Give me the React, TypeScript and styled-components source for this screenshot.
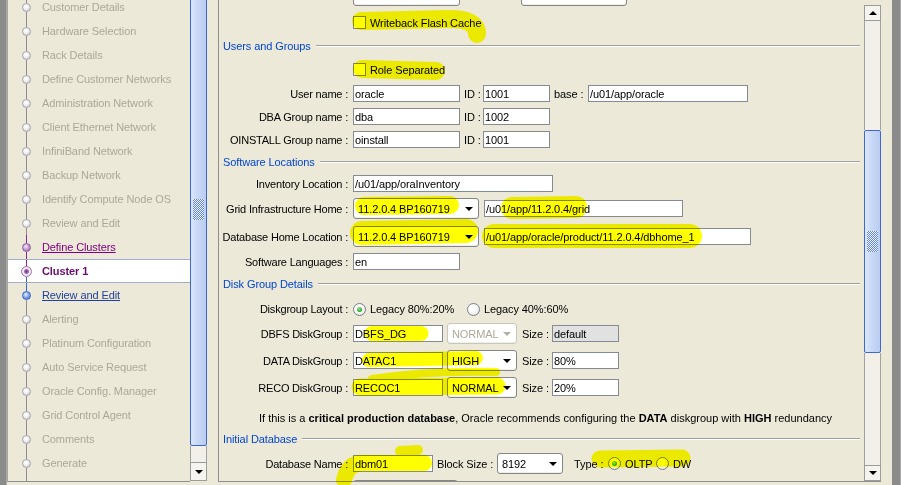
import React from "react";
import styled, { createGlobalStyle, css } from "styled-components";

const GlobalStyle = createGlobalStyle`
  html, body { margin: 0; padding: 0; background: #ece9d8; overflow: hidden; }
  #root { width: 901px; height: 485px; }
`;

const GRAY = "#8e8e8e";
const PURPLE = "#86268f";
const BLUE = "#3a66d0";

type Kind = "off" | "done" | "current" | "next";

interface NavItem {
  label: string;
  kind: Kind;
  top?: string;
  bottom?: string;
}

const NAV: NavItem[] = [
  { label: "Customer Details", kind: "off" },
  { label: "Hardware Selection", kind: "off" },
  { label: "Rack Details", kind: "off" },
  { label: "Define Customer Networks", kind: "off" },
  { label: "Administration Network", kind: "off" },
  { label: "Client Ethernet Network", kind: "off" },
  { label: "InfiniBand Network", kind: "off" },
  { label: "Backup Network", kind: "off" },
  { label: "Identify Compute Node OS", kind: "off" },
  { label: "Review and Edit", kind: "off" },
  { label: "Define Clusters", kind: "done", top: PURPLE, bottom: PURPLE },
  { label: "Cluster 1", kind: "current", top: PURPLE, bottom: BLUE },
  { label: "Review and Edit", kind: "next", top: BLUE },
  { label: "Alerting", kind: "off" },
  { label: "Platinum Configuration", kind: "off" },
  { label: "Auto Service Request", kind: "off" },
  { label: "Oracle Config. Manager", kind: "off" },
  { label: "Grid Control Agent", kind: "off" },
  { label: "Comments", kind: "off" },
  { label: "Generate", kind: "off" },
];

/* ---------- frame ---------- */

const Screen = styled.div`
  position: relative;
  width: 901px;
  height: 485px;
  overflow: hidden;
  display: flex;
  align-items: flex-start;
  background: #ece9d8;
  font-family: "Liberation Sans", Arial, sans-serif;
  font-size: 11px;
  letter-spacing: -0.1px;
  color: #000;
`;

const OuterEdge = styled.div<{ $w: number; $ml?: number }>`
  flex: none;
  width: ${(p) => p.$w}px;
  height: 485px;
  margin-left: ${(p) => p.$ml ?? 0}px;
  background: #8b8b8b;
  box-shadow: inset -1px 0 #a9a9a9;
`;

/* ---------- navigation train ---------- */

const NavPanel = styled.nav`
  flex: none;
  width: 183px;
  height: 482px;
  box-sizing: border-box;
  border-left: 1px solid #a9a89f;
  border-bottom: 1px solid #8f8f8f;
  overflow: hidden;
`;

const NavList = styled.ul`
  list-style: none;
  margin: -5px 0 0;
  padding: 0;
  display: flex;
  flex-direction: column;
`;

const NavRow = styled.li<{ $current?: boolean }>`
  flex: none;
  height: 24px;
  box-sizing: border-box;
  display: flex;
  align-items: stretch;
  ${(p) =>
    p.$current &&
    css`
      background: #ffffff;
      border-top: 1px solid #a3afca;
      border-bottom: 1px solid #a3afca;
    `}
`;

const NavTail = styled.li`
  flex: none;
  height: 12px;
  display: flex;
`;

const NodeCol = styled.div`
  flex: none;
  width: 34px;
  box-sizing: border-box;
  padding-left: 14px;
  display: flex;
  flex-direction: column;
  align-items: flex-start;
`;

const Seg = styled.div<{ $c: string }>`
  flex: 1;
  width: 1px;
  margin-left: 4px;
  background: ${(p) => p.$c};
`;

const nodeLook: Record<Kind, ReturnType<typeof css>> = {
  off: css`
    width: 9px;
    height: 9px;
    border: 1px solid #a4a4ac;
    background: radial-gradient(circle at 40% 35%, #ffffff 0, #fafafb 30%, #d4d4dc 80%, #babac4 100%);
  `,
  done: css`
    width: 9px;
    height: 9px;
    border: 1px solid #8e5a9c;
    background: radial-gradient(circle at 40% 35%, #f5e9f7 0, #c9a2d3 45%, #9a5cab 100%);
  `,
  current: css`
    width: 11px;
    height: 11px;
    margin-left: -1px;
    border: 1px solid #a07aad;
    background: radial-gradient(circle, #7a2a8a 0, #a76cb5 2px, #efe4f2 3px, #f7f1f8 3.5px, #c9aad2 100%);
  `,
  next: css`
    width: 9px;
    height: 9px;
    border: 1px solid #3463c9;
    background: radial-gradient(circle at 40% 35%, #e6eeff 0, #88aaec 45%, #3a6ad6 100%);
  `,
};

const Node = styled.div<{ $kind: Kind }>`
  flex: none;
  box-sizing: border-box;
  border-radius: 50%;
  ${(p) => nodeLook[p.$kind]}
`;

const labelLook: Record<Kind, ReturnType<typeof css>> = {
  off: css`
    color: #aca899;
  `,
  done: css`
    color: #800080;
    text-decoration: underline;
  `,
  current: css`
    color: #6c0c72;
    font-weight: bold;
  `,
  next: css`
    color: #21409f;
    text-decoration: underline;
  `,
};

const NavLabel = styled.span<{ $kind: Kind }>`
  align-self: center;
  white-space: nowrap;
  ${(p) => labelLook[p.$kind]}
`;

/* ---------- scrollbars ---------- */

const VScroll = styled.div<{ $mt: number }>`
  flex: none;
  width: 17px;
  margin-top: ${(p) => p.$mt}px;
  display: flex;
  flex-direction: column;
`;

const Thumb = styled.div<{ $h: number; $mt?: number }>`
  flex: none;
  height: ${(p) => p.$h}px;
  margin-top: ${(p) => p.$mt ?? 0}px;
  box-sizing: border-box;
  border: 1px solid #3c68d4;
  border-radius: 2px;
  background: linear-gradient(90deg, #dde7fa 0%, #cad9f6 40%, #b9cdf2 100%);
  display: flex;
  align-items: center;
  justify-content: center;
`;

const Grip = styled.div`
  width: 11px;
  height: 21px;
  background: repeating-conic-gradient(#5b84e2 0% 25%, #f4f7fe 0% 50%) 0 0 / 2px 2px;
`;

const Track = styled.div<{ $h: number }>`
  flex: none;
  height: ${(p) => p.$h}px;
  box-sizing: border-box;
  border-left: 1px solid #a2a2a2;
  border-right: 1px solid #a2a2a2;
  background: #f2f0e8;
`;

const ArrowBtn = styled.div<{ $h: number }>`
  flex: none;
  height: ${(p) => p.$h}px;
  box-sizing: border-box;
  border: 1px solid #9b9b9b;
  background: #f5f4ef;
  display: flex;
  align-items: center;
  justify-content: center;
`;

const Tri = styled.span<{ $up?: boolean; $dim?: boolean }>`
  width: 0;
  height: 0;
  border-left: 4px solid transparent;
  border-right: 4px solid transparent;
  ${(p) =>
    p.$up
      ? css`
          border-bottom: 4px solid #000;
        `
      : css`
          border-top: 4px solid ${p.$dim ? "#b3b1a6" : "#000"};
        `}
`;

/* ---------- form panel ---------- */

const MainPanel = styled.section`
  flex: none;
  width: 663px;
  height: 482px;
  margin-left: 11px;
  box-sizing: border-box;
  border-left: 1px solid #8f8f8f;
  border-bottom: 1px solid #8f8f8f;
  display: flex;
  align-items: flex-start;
`;

const Form = styled.div`
  flex: 1;
  min-width: 0;
  height: 481px;
  overflow: hidden;
  box-sizing: border-box;
  padding-right: 4px;
  display: flex;
  flex-direction: column;
`;

const Row = styled.div<{ $mt: number; $h: number }>`
  flex: none;
  display: flex;
  align-items: center;
  margin-top: ${(p) => p.$mt}px;
  height: ${(p) => p.$h}px;
`;

const Label = styled.div`
  flex: none;
  width: 129px;
  margin-right: 5px;
  display: flex;
  justify-content: flex-end;
  white-space: nowrap;
  letter-spacing: -0.2px;
`;

const Tag = styled.span<{ $w: number; $pl?: number }>`
  flex: none;
  width: ${(p) => p.$w}px;
  padding-left: ${(p) => p.$pl ?? 4}px;
  box-sizing: border-box;
  white-space: nowrap;
`;

const Field = styled.div<{ $w: number; $ml?: number; $disabled?: boolean }>`
  flex: none;
  width: ${(p) => p.$w}px;
  height: 17px;
  margin-left: ${(p) => p.$ml ?? 0}px;
  box-sizing: border-box;
  border: 1px solid #858a93;
  background: ${(p) => (p.$disabled ? "#e1e1e1" : "#ffffff")};
  padding-left: 1px;
  display: flex;
  align-items: center;
  white-space: nowrap;
  overflow: hidden;
`;

const Combo = styled.div<{ $w: number; $ml?: number; $disabled?: boolean }>`
  flex: none;
  width: ${(p) => p.$w}px;
  height: 21px;
  margin-left: ${(p) => p.$ml ?? 0}px;
  box-sizing: border-box;
  border: 1px solid ${(p) => (p.$disabled ? "#c9c7bc" : "#858585")};
  border-radius: 3px;
  background: #ffffff;
  box-shadow: inset 0 -1px #f0efe9;
  color: ${(p) => (p.$disabled ? "#aca899" : "#000")};
  padding: 0 5px 0 4px;
  display: flex;
  align-items: center;
  justify-content: space-between;
  white-space: nowrap;
`;

const Check = styled.span`
  flex: none;
  width: 13px;
  height: 13px;
  box-sizing: border-box;
  border: 1px solid #858585;
  background: #ffffff;
`;

const Option = styled.span<{ $w?: number }>`
  flex: none;
  ${(p) => (p.$w ? `width: ${p.$w}px;` : "")}
  display: flex;
  align-items: center;
  gap: 4px;
  white-space: nowrap;
`;

const Radio = styled.span<{ $on?: boolean }>`
  flex: none;
  width: 13px;
  height: 13px;
  box-sizing: border-box;
  border-radius: 50%;
  border: 1px solid #76808c;
  background: radial-gradient(circle at 40% 35%, #ffffff 35%, #dedcd3 100%);
  display: flex;
  align-items: center;
  justify-content: center;
  ${(p) =>
    p.$on &&
    css`
      &::after {
        content: "";
        width: 5px;
        height: 5px;
        border-radius: 50%;
        background: radial-gradient(circle at 40% 35%, #9be79b, #24a424 70%);
      }
    `}
`;

const Section = styled.div<{ $mt: number }>`
  flex: none;
  display: flex;
  align-items: center;
  height: 14px;
  margin-top: ${(p) => p.$mt}px;
  padding-left: 4px;
  color: #0046d5;
  white-space: nowrap;
`;

const Rule = styled.div`
  flex: 1;
  margin-left: 5px;
  border-top: 1px solid #9f9f9f;
  border-bottom: 1px solid #ffffff;
`;

const Note = styled.div<{ $mt: number }>`
  flex: none;
  margin-top: ${(p) => p.$mt}px;
  height: 14px;
  line-height: 14px;
  padding-left: 12px;
  text-align: center;
  white-space: nowrap;
  letter-spacing: 0;
  b {
    font-weight: bold;
  }
`;

const Highlights = styled.svg`
  position: absolute;
  left: 0;
  top: 0;
  width: 901px;
  height: 485px;
  pointer-events: none;
  mix-blend-mode: multiply;
`;

const Marker = styled.path`
  fill: none;
  stroke: #ffff00;
  stroke-linecap: round;
  stroke-linejoin: round;
`;

const ComboBox = ({ w, ml, value, disabled }: { w: number; ml?: number; value?: string; disabled?: boolean }) => (
  <Combo $w={w} $ml={ml} $disabled={disabled}>
    <span>{value}</span>
    {value !== undefined && <Tri $dim={disabled} />}
  </Combo>
);

export default function App() {
  return (
    <>
      <GlobalStyle />
      <Screen>
        <OuterEdge $w={7} />

        <NavPanel>
          <NavList>
            {NAV.map((item, i) => (
              <NavRow key={i} $current={item.kind === "current"}>
                <NodeCol>
                  <Seg $c={item.top ?? GRAY} />
                  <Node $kind={item.kind} />
                  <Seg $c={item.bottom ?? GRAY} />
                </NodeCol>
                <NavLabel $kind={item.kind}>{item.label}</NavLabel>
              </NavRow>
            ))}
            <NavTail>
              <NodeCol>
                <Seg $c={GRAY} />
              </NodeCol>
            </NavTail>
          </NavList>
        </NavPanel>

        <VScroll $mt={0}>
          <Thumb $h={473} $mt={-27}>
            <Grip />
          </Thumb>
          <Track $h={16} />
          <ArrowBtn $h={19}>
            <Tri />
          </ArrowBtn>
        </VScroll>

        <MainPanel>
          <Form>
            <Row $mt={-15} $h={21}>
              <Label />
              <ComboBox w={107} />
              <ComboBox w={106} ml={61} />
            </Row>
            <Row $mt={8} $h={17}>
              <Label />
              <Check />
              <Tag $w={140}>Writeback Flash Cache</Tag>
            </Row>

            <Section $mt={8}>
              <span>Users and Groups</span>
              <Rule />
            </Section>
            <Row $mt={8} $h={17}>
              <Label />
              <Check />
              <Tag $w={120}>Role Separated</Tag>
            </Row>
            <Row $mt={7} $h={17}>
              <Label>User name :</Label>
              <Field $w={107}>oracle</Field>
              <Tag $w={23}>ID :</Tag>
              <Field $w={67}>1001</Field>
              <Tag $w={38}>base :</Tag>
              <Field $w={160}>/u01/app/oracle</Field>
            </Row>
            <Row $mt={6} $h={17}>
              <Label>DBA Group name :</Label>
              <Field $w={107}>dba</Field>
              <Tag $w={23}>ID :</Tag>
              <Field $w={67}>1002</Field>
            </Row>
            <Row $mt={6} $h={17}>
              <Label>OINSTALL Group name :</Label>
              <Field $w={107}>oinstall</Field>
              <Tag $w={23}>ID :</Tag>
              <Field $w={67}>1001</Field>
            </Row>

            <Section $mt={7}>
              <span>Software Locations</span>
              <Rule />
            </Section>
            <Row $mt={6} $h={17}>
              <Label>Inventory Location :</Label>
              <Field $w={200}>/u01/app/oraInventory</Field>
            </Row>
            <Row $mt={6} $h={21}>
              <Label>Grid Infrastructure Home :</Label>
              <ComboBox w={126} value="11.2.0.4 BP160719" />
              <Field $w={199} $ml={5}>/u01/app/11.2.0.4/grid</Field>
            </Row>
            <Row $mt={7} $h={21}>
              <Label>Database Home Location :</Label>
              <ComboBox w={126} value="11.2.0.4 BP160719" />
              <Field $w={267} $ml={5}>/u01/app/oracle/product/11.2.0.4/dbhome_1</Field>
            </Row>
            <Row $mt={6} $h={17}>
              <Label>Software Languages :</Label>
              <Field $w={107}>en</Field>
            </Row>

            <Section $mt={7}>
              <span>Disk Group Details</span>
              <Rule />
            </Section>
            <Row $mt={9} $h={18}>
              <Label>Diskgroup Layout :</Label>
              <Option $w={114}>
                <Radio $on />
                <span>Legacy 80%:20%</span>
              </Option>
              <Option>
                <Radio />
                <span>Legacy 40%:60%</span>
              </Option>
            </Row>
            <Row $mt={5} $h={21}>
              <Label>DBFS DiskGroup :</Label>
              <Field $w={90}>DBFS_DG</Field>
              <ComboBox w={70} ml={4} value="NORMAL" disabled />
              <Tag $w={35} $pl={5}>Size :</Tag>
              <Field $w={67} $disabled>default</Field>
            </Row>
            <Row $mt={6} $h={21}>
              <Label>DATA DiskGroup :</Label>
              <Field $w={90}>DATAC1</Field>
              <ComboBox w={70} ml={4} value="HIGH" />
              <Tag $w={35} $pl={5}>Size :</Tag>
              <Field $w={67}>80%</Field>
            </Row>
            <Row $mt={6} $h={21}>
              <Label>RECO DiskGroup :</Label>
              <Field $w={90}>RECOC1</Field>
              <ComboBox w={70} ml={4} value="NORMAL" />
              <Tag $w={35} $pl={5}>Size :</Tag>
              <Field $w={67}>20%</Field>
            </Row>
            <Note $mt={13}>
              If this is a <b>critical production database</b>, Oracle recommends configuring the <b>DATA</b> diskgroup
              with <b>HIGH</b> redundancy
            </Note>

            <Section $mt={7}>
              <span>Initial Database</span>
              <Rule />
            </Section>
            <Row $mt={7} $h={21}>
              <Label>Database Name :</Label>
              <Field $w={80}>dbm01</Field>
              <Tag $w={64}>Block Size :</Tag>
              <ComboBox w={66} value="8192" />
              <Tag $w={45} $pl={11}>Type :</Tag>
              <Option $w={48}>
                <Radio $on />
                <span>OLTP</span>
              </Option>
              <Option>
                <Radio />
                <span>DW</span>
              </Option>
            </Row>
            <Row $mt={6} $h={21}>
              <Label />
              <ComboBox w={105} />
            </Row>
          </Form>

          <VScroll $mt={5}>
            <ArrowBtn $h={16}>
              <Tri $up />
            </ArrowBtn>
            <Track $h={109} />
            <Thumb $h={223}>
              <Grip />
            </Thumb>
            <Track $h={112} />
            <ArrowBtn $h={16}>
              <Tri />
            </ArrowBtn>
          </VScroll>
        </MainPanel>

        <OuterEdge $w={9} $ml={11} />

        <Highlights viewBox="0 0 901 485">
          <Marker d="M361 21 L446 19 Q477 18 477 34" strokeWidth={18} />
          <Marker d="M362 69 L436 71" strokeWidth={18} />
          <Marker d="M364 206 L450 205" strokeWidth={18} />
          <Marker d="M512 208 L576 207" strokeWidth={22} />
          <Marker d="M362 233 L466 231" strokeWidth={24} />
          <Marker d="M494 236 L690 236" strokeWidth={24} />
          <Marker d="M372 333.5 L421 333.5" strokeWidth={15} />
          <Marker d="M369 360 L476 358" strokeWidth={14} />
          <Marker d="M496 372 Q430 370 372 379" strokeWidth={8} />
          <Marker d="M360 387 L497 386" strokeWidth={17} />
          <Marker d="M344 480 Q348 463 362 463 L424 463" strokeWidth={16} />
          <Marker d="M400 451 L418 450" strokeWidth={10} />
          <Marker d="M600 459 L682 458" strokeWidth={17} />
        </Highlights>
      </Screen>
    </>
  );
}
